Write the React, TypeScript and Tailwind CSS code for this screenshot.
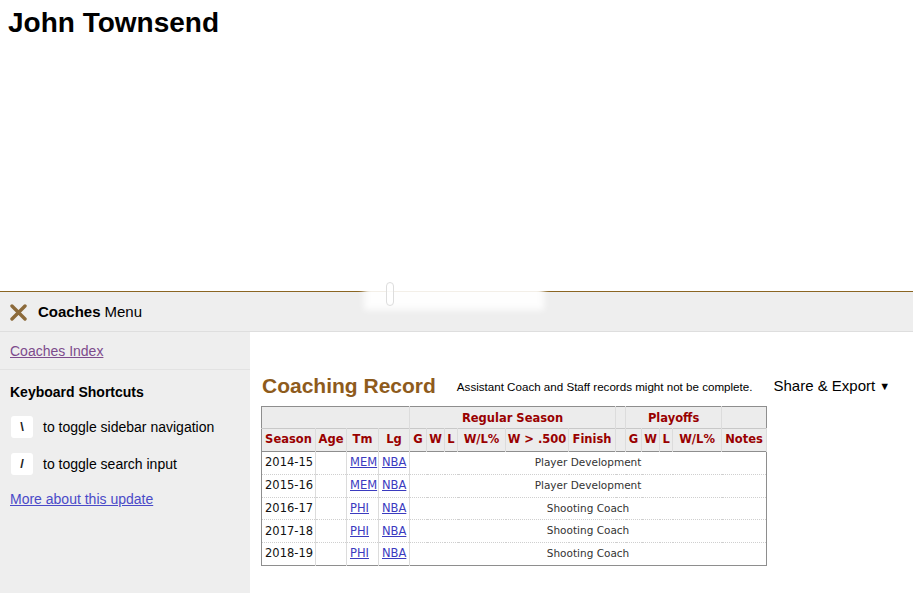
import React from 'react';

const cols = [54, 31, 32, 31, 17, 18, 13, 48, 63, 47, 10, 16, 18, 13, 49, 45];

const rows = [
  { season: '2014-15', tm: 'MEM', role: 'Player Development' },
  { season: '2015-16', tm: 'MEM', role: 'Player Development' },
  { season: '2016-17', tm: 'PHI', role: 'Shooting Coach' },
  { season: '2017-18', tm: 'PHI', role: 'Shooting Coach' },
  { season: '2018-19', tm: 'PHI', role: 'Shooting Coach' },
];

const heads = ['Season', 'Age', 'Tm', 'Lg', 'G', 'W', 'L', 'W/L%', 'W > .500', 'Finish', '', 'G', 'W', 'L', 'W/L%', 'Notes'];

function KeyCap({ k }: { k: string }) {
  return (
    <span className="w-[22px] h-[22px] bg-white rounded-[3px] flex items-center justify-center text-[13px] font-bold text-[#222]">
      {k}
    </span>
  );
}

export default function App() {
  return (
    <div className="relative w-[913px] h-[594px] overflow-hidden bg-white font-['Liberation_Sans',Arial,sans-serif] text-black">
      <h1 className="h-[291px] pl-[8px] pt-[6px] text-[28px] font-bold leading-[34px]">John Townsend</h1>

      {/* glare over the divider */}
      <div className="absolute left-[364px] top-[284px] w-[180px] h-[26px] bg-white/90 blur-[3px]" />
      <div className="absolute left-[386px] top-[282px] w-[8px] h-[24px] rounded-full border border-[#ddd] bg-white/60" />

      <div className="border-t border-t-[#8a6522] bg-[#eeeeee] h-[41px] flex items-center pl-[10px] border-b border-b-[#dedede]">
        <svg width="17" height="17" viewBox="0 0 17 17" className="mr-[11px] mt-[1px]">
          <path d="M2 2 L15 15 M15 2 L2 15" stroke="#8c6a3a" strokeWidth="3.4" strokeLinecap="round" />
        </svg>
        <span className="text-[15px] font-bold mt-[1px]">Coaches</span>
        <span className="text-[15px] ml-[4px] mt-[1px]">Menu</span>
      </div>

      <div className="flex h-[261px]">
        <aside className="w-[250px] bg-[#eeeeee] flex flex-col text-[14px]">
          <div className="h-[38px] flex items-center pl-[10px] pt-[2px] border-b border-[#e2e2e2]">
            <a href="#" className="text-[#7d4b8c] underline">Coaches Index</a>
          </div>
          <div className="pl-[10px] pt-[12px] font-bold">Keyboard Shortcuts</div>
          <div className="pl-[11px] mt-[13px] flex items-center gap-[10px]">
            <KeyCap k="\" />
            <span>to toggle sidebar navigation</span>
          </div>
          <div className="pl-[11px] mt-[15px] flex items-center gap-[10px]">
            <KeyCap k="/" />
            <span>to toggle search input</span>
          </div>
          <a href="#" className="pl-[10px] mt-[14px] text-[#4a4ac8] underline">More about this update</a>
        </aside>

        <main className="flex-1 pl-[11px] pt-[42px]">
          <div className="flex items-center h-[24px] mb-[8px]">
            <h2 className="text-[21px] font-bold text-[#8e5b1c] ml-[1px]">Coaching Record</h2>
            <span className="text-[11.6px] ml-[21px] mt-[1px]">Assistant Coach and Staff records might not be complete.</span>
            <span className="text-[15px] ml-[21px]">
              Share &amp; Export <span className="text-[11px] align-[1px]">▼</span>
            </span>
          </div>

          <table className="table-fixed border-collapse border border-[#8e8e8e] w-[505px] font-['DejaVu_Sans',Verdana,sans-serif] text-[11.5px]">
            <colgroup>
              {cols.map((w, i) => (
                <col key={i} style={{ width: w }} />
              ))}
            </colgroup>
            <thead>
              <tr className="bg-[#ececec] h-[22px] text-[#990000]">
                <th colSpan={4} className="border-r border-[#dcdcdc]"></th>
                <th colSpan={6} className="border-r border-[#dcdcdc] font-bold pt-[3px]">Regular Season</th>
                <th className="border-r border-[#dcdcdc]"></th>
                <th colSpan={4} className="border-r border-[#dcdcdc] font-bold pt-[3px]">Playoffs</th>
                <th></th>
              </tr>
              <tr className="bg-[#ececec] h-[23px] text-[#990000] border-t border-[#c8c8c8] border-b border-b-[#8e8e8e]">
                {heads.map((h, i) => (
                  <th key={i} className="border-r border-[#dcdcdc] font-bold px-0 whitespace-nowrap">
                    {h}
                  </th>
                ))}
              </tr>
            </thead>
            <tbody>
              {rows.map((r) => (
                <tr key={r.season} className="h-[22.8px] border-b border-dotted border-[#cfcfcf] text-[#111]">
                  <td className="border-r border-[#dcdcdc] pl-[3px]">{r.season}</td>
                  <td className="border-r border-[#dcdcdc]"></td>
                  <td className="border-r border-[#dcdcdc] pl-[3px]">
                    <a href="#" className="text-[#3b3bbf] underline">{r.tm}</a>
                  </td>
                  <td className="border-r border-[#dcdcdc] pl-[3px]">
                    <a href="#" className="text-[#3b3bbf] underline">NBA</a>
                  </td>
                  <td colSpan={12} className="text-center text-[#333] text-[10.5px]">{r.role}</td>
                </tr>
              ))}
            </tbody>
          </table>
        </main>
      </div>
    </div>
  );
}
